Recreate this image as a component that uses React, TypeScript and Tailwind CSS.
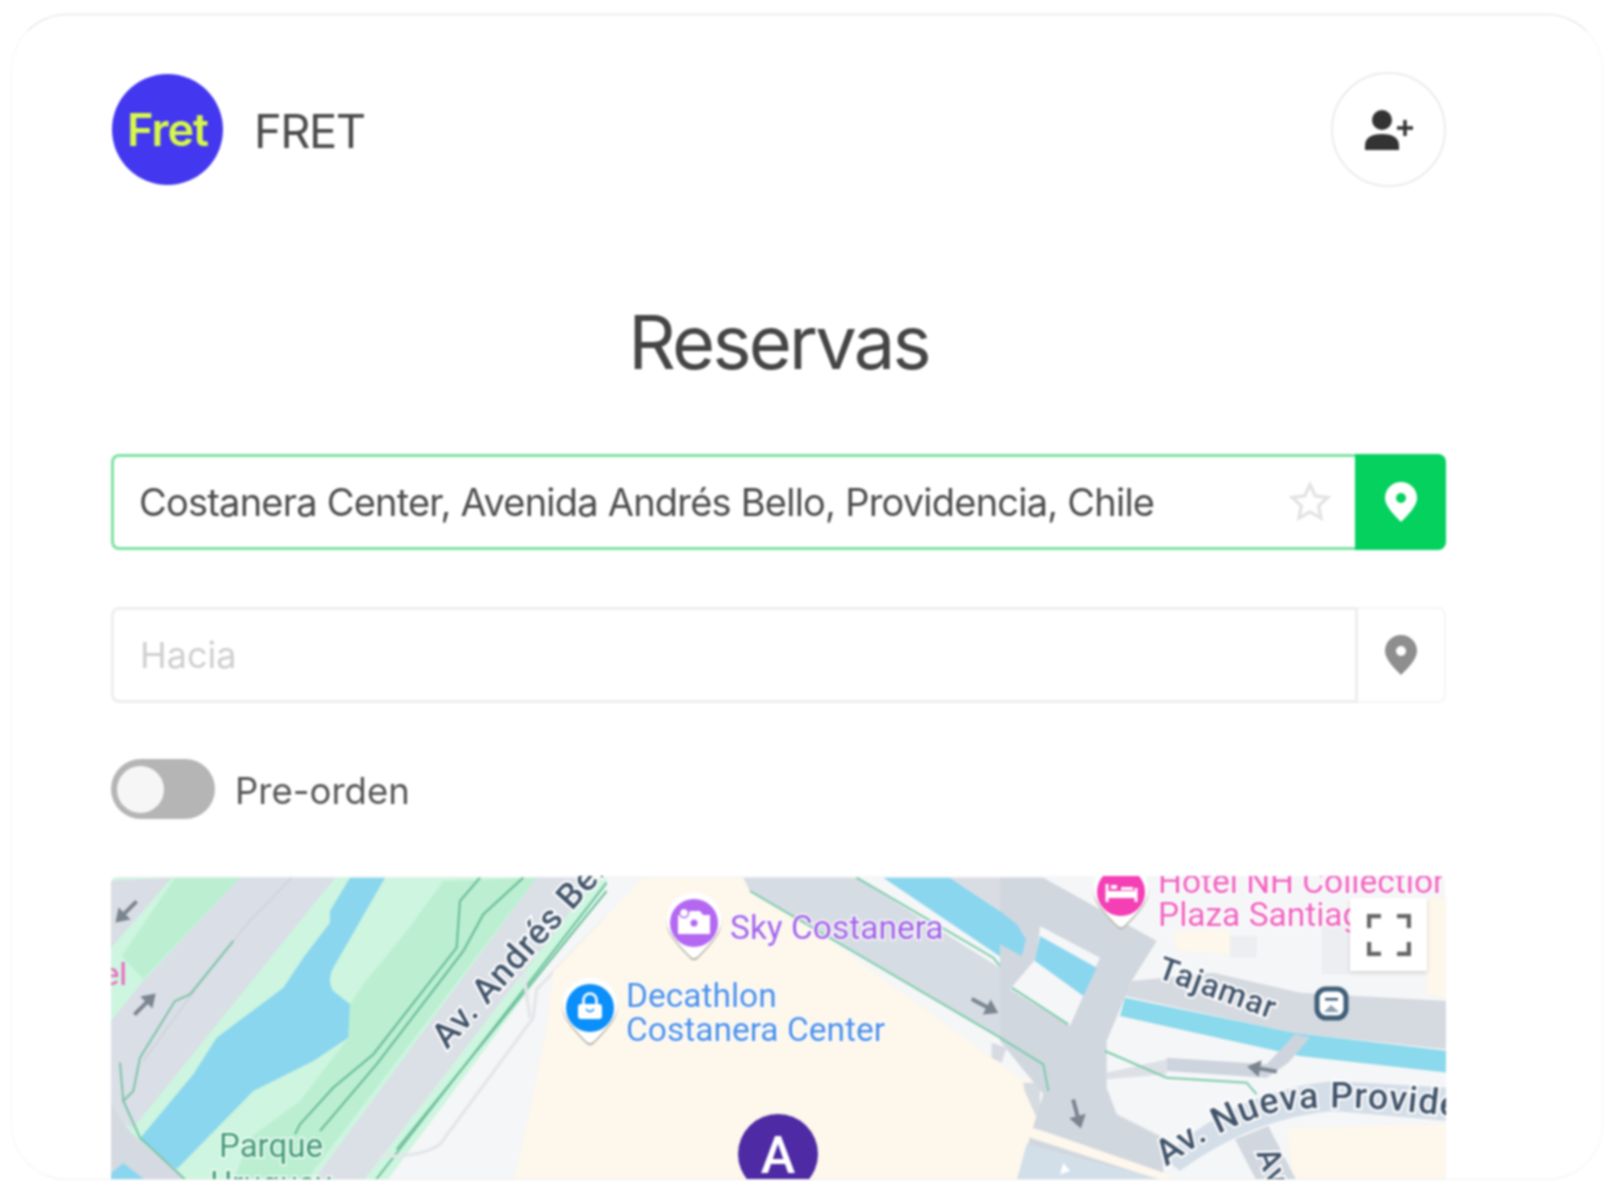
const bodyFont = "[font-family:Inter,'Liberation_Sans',sans-serif]"

function Arrow({ x, y, angle }: { x: number; y: number; angle: number }) {
  return (
    <path
      transform={`translate(${x} ${y}) rotate(${angle})`}
      d="M-15 -2 L2 -2 L2 -8.5 L15 0 L2 8.5 L2 2 L-15 2 Z"
      fill="#7b8590"
    />
  )
}

function Pin({ x, y, color, children }: { x: number; y: number; color: string; children: React.ReactNode }) {
  return (
    <g transform={`translate(${x} ${y})`}>
      <path d="M-27 2 A27.5 27.5 0 1 1 27 2 Q25 12 4 33 Q0 37 -4 33 Q-25 12 -27 2 Z" fill="#bfbcb2" transform="translate(0 2.5)" />
      <path d="M-27 2 A27.5 27.5 0 1 1 27 2 Q25 12 4 33 Q0 37 -4 33 Q-25 12 -27 2 Z" fill="#ffffff" />
      <circle r="24" fill={color} />
      {children}
    </g>
  )
}

const haloDark = { paintOrder: "stroke", stroke: "#ffffff", strokeWidth: 4 } as const
const halo = { paintOrder: "stroke", stroke: "#ffffff", strokeWidth: 3, strokeOpacity: 0.8 } as const

function MapArt() {
  return (
    <svg viewBox="111 875 1335 305" className="block h-full w-full" fontFamily="Roboto, sans-serif">
      <rect x="111" y="875" width="1335" height="305" fill="#f5f6f7" />

      {/* park and river, left of Av. Andres Bello */}
      <g transform="translate(100 860) scale(0.3333)">
        <polygon points="33,50 1320,50 640,960 33,960" fill="#cdf5df" />
        <polygon points="33,60 215,50 33,260" fill="#d9dde5" />
        <polygon points="225,50 420,50 130,355 65,285" fill="#bcefd2" />
        <polygon points="420,50 705,50 100,800 33,770 33,480 130,360" fill="#dadee6" />
        <polyline points="575,50 440,190 290,380 130,600" fill="none" stroke="#cfd3da" strokeWidth="5" />
        <polygon points="1030,60 1310,50 640,930 620,960 400,960 450,830 600,720 745,530 750,430 790,370 920,210" fill="#bcefd2" />
        <path d="M750 50 L855 50 L700 320 Q680 360 700 390 L750 430 L745 530 L640 600 L460 690 L230 925 L118 835 L280 640 L350 530 L550 380 L610 290 L690 185 L690 150 Z" fill="#8bd6ef" />
        <polygon points="33,935 70,905 140,960 33,960" fill="#8bd6ef" />
        <path d="M33 720 Q70 800 120 840 L265 960 L140 960 L70 905 L33 935 Z" fill="#d5d9e1" />
        <polyline points="1140,50 1080,120 1070,260 820,580 700,680 600,790 585,820" fill="none" stroke="#6fbf9d" strokeWidth="7" />
        <polyline points="1270,50 1150,160 1090,270 830,610 660,810" fill="none" stroke="#6fbf9d" strokeWidth="7" />
        <polyline points="400,240 270,400 225,420 120,590 100,690 70,720 60,605 70,720 120,830 260,960" fill="none" stroke="#7cc3a8" strokeWidth="6" />
        <polygon points="1310,50 1490,50 790,960 640,960" fill="#dbdfe6" />
        <polygon points="1490,50 1520,50 1520,75 860,960 790,960" fill="#cdf5df" />
        <line x1="825" y1="960" x2="1520" y2="65" stroke="#6fbf9d" strokeWidth="6" />
        <line x1="890" y1="865" x2="1520" y2="90" stroke="#6fbf9d" strokeWidth="6" />
        <path d="M840 885 Q960 890 1020 850 L1300 470 L1310 385 L1520 170" fill="none" stroke="#e4e6ea" strokeWidth="10" />
        <path d="M1270 330 L1290 470" fill="none" stroke="#e4e6ea" strokeWidth="10" />
      </g>

      {/* mall block and the roads behind it */}
      <g transform="translate(540 860) scale(0.3333)">
        <path d="M-80 960 L-20 700 L20 500 L40 330 L310 50 L1500 50 L1500 960 Z" fill="#fdf7ec" />
        <polygon points="610,50 950,50 1380,320 1410,380 1500,430 1500,600 630,90" fill="#d6dce3" />
        <polygon points="950,50 1030,50 1400,300 1380,320" fill="#f5f6f7" />
        <polygon points="1030,50 1230,50 1440,190 1465,240 1440,285 1400,300" fill="#8bd6ef" />
        <polygon points="1230,50 1500,50 1500,430 1410,380 1465,320 1465,240 1440,190" fill="#d9dde3" />
        <polygon points="800,185 1500,600 1500,650 1440,650 900,260" fill="#f5f6f7" />
        <polyline points="630,90 1500,600" fill="none" stroke="#7ccbab" strokeWidth="6" />
        <polyline points="950,50 1360,290 1400,340" fill="none" stroke="#7ccbab" strokeWidth="6" />
        <polygon points="1355,545 1400,560 1385,605 1355,590" fill="#d6dbe2" />
        <polygon points="1450,665 1500,665 1500,820 1470,800" fill="#d6dbe2" />
      </g>

      {/* right side streets */}
      <g transform="translate(1000 860) scale(0.3333)">
        <rect x="120" y="50" width="1222" height="910" fill="#f5f6f7" />
        <polygon points="520,210 690,205 690,280 530,270" fill="#fdf7ec" />
        <polygon points="690,225 770,225 770,290 690,290" fill="#eceef1" />
        <polygon points="965,195 1050,190 1050,340 965,340" fill="#eceef1" />
        <polygon points="1280,110 1342,110 1342,410 1280,400" fill="#fdf7ec" />
        <polygon points="860,800 1342,790 1342,960 880,960" fill="#fdf7ec" />
        <polygon points="0,620 60,660 110,770 50,960 0,960" fill="#fdf7ec" />

        <polygon points="0,50 130,50 470,240 395,360 320,540 320,680 350,760 490,830 490,960 50,960 105,780 130,700 0,540" fill="#d1d7df" />
        <polygon points="0,150 50,190 78,235 65,285 0,250" fill="#8bd6ef" />
        <polygon points="120,195 300,290 210,495 30,385 110,290" fill="#f5f6f7" />
        <polygon points="120,225 290,320 250,405 105,300" fill="#8bd6ef" />

        <path d="M395 360 L640 335 L900 395 L1342 420 L1342 565 L880 515 L375 405 Z" fill="#d5d9e0" />
        <path d="M375 410 L880 515 L1342 570 L1342 635 L900 585 L360 465 Z" fill="#8bd9ec" />
        <path d="M885 520 L930 530 L865 605 L800 650 L500 630 L500 590 L800 610 Z" fill="#cdd4dd" />
        <polygon points="320,635 500,595 500,640 320,655" fill="#dde0e6" />
        <polyline points="315,570 500,650 740,665 770,700" fill="none" stroke="#7ccbab" strokeWidth="6" />
        <polyline points="35,380 205,490" fill="none" stroke="#7ccbab" strokeWidth="6" />
        <polyline points="0,530 130,610 145,690" fill="none" stroke="#7ccbab" strokeWidth="6" />
        <path d="M490 890 Q700 690 1000 660 L1342 680 L1342 780 L1000 750 Q760 770 540 930 Z" fill="#d4dee8" />
        <polygon points="705,835 805,795 890,960 770,960" fill="#d1d7df" />
        <polygon points="95,800 130,810 520,945 490,960 90,830" fill="#fdf7ec" />
        <polygon points="80,850 500,960 50,960" fill="#d2dfe9" />
        <polygon points="190,905 210,930 180,940" fill="#ffffff" />
      </g>

      <Arrow x={126} y={911} angle={135} />
      <Arrow x={145} y={1003} angle={-45} />
      <Arrow x={985} y={1005} angle={28} />
      <Arrow x={1262} y={1068} angle={190} />
      <Arrow x={1077} y={1113} angle={75} />

      <g fontSize="33" fill="#3f9a76" textAnchor="middle" style={halo}>
        <text x="271" y="1156">Parque</text>
        <text x="271" y="1194">Uruguay</text>
      </g>
      <text x="127" y="984" fontSize="32" textAnchor="end" fill="#f062c0">el</text>

      <g fontWeight="500" fill="#40536a" letterSpacing="1" style={haloDark}>
        <text fontSize="35" transform="translate(447 1049) rotate(-48)">Av. Andrés Bello</text>
        <text fontSize="32" transform="translate(1156 976) rotate(20)">Tajamar</text>
        <path id="nueva" d="M1166 1166 Q1214 1130 1267 1113 Q1330 1098 1470 1118" fill="none" stroke="none" />
        <text fontSize="36">
          <textPath href="#nueva">Av. Nueva Providencia</textPath>
        </text>
        <text fontSize="32" transform="translate(1256 1152) rotate(68)">Av</text>
      </g>

      <Pin x={694} y={922} color="#b468f2">
        <path d="M-16 -8 H-7 L-4 -12 H6 L9 -8 H16 V11 H-16 Z" fill="#ffffff" />
        <circle cx="-10" cy="-10" r="4.5" fill="#ffffff" stroke="#b468f2" strokeWidth="1.5" />
        <circle cx="0" cy="0" r="3.5" fill="#b468f2" />
      </Pin>
      <Pin x={590} y={1007} color="#0b8ffa">
        <path d="M-6.5 -4 V-8 A6.5 6.5 0 0 1 6.5 -8 V-4" fill="none" stroke="#ffffff" strokeWidth="2.6" />
        <rect x="-12" y="-4" width="24" height="15" rx="3" fill="#ffffff" />
        <path d="M-4 1 Q0 6 4 1" fill="none" stroke="#0b8ffa" strokeWidth="1.6" />
      </Pin>
      <Pin x={1121} y={891} color="#f43fb5">
        <path d="M-14 -8 V10 M15 -4 V10" stroke="#ffffff" strokeWidth="3" fill="none" />
        <rect x="-14" y="-1" width="29" height="7" fill="#ffffff" />
        <rect x="-10" y="-7" width="6" height="4" fill="#ffffff" />
        <path d="M0 -5 H12 V-2 H0 Z" fill="#ffffff" />
      </Pin>

      <g fontSize="33.5" fill="#a262e8" style={halo}>
        <text x="730" y="938">Sky Costanera</text>
      </g>
      <g fontSize="33.5" fill="#4a8fe8" style={halo}>
        <text x="626" y="1006">Decathlon</text>
        <text x="626" y="1040">Costanera Center</text>
      </g>
      <g fontSize="33.5" fill="#f062c0" style={halo}>
        <text x="1158" y="892">Hotel NH Collection</text>
        <text x="1158" y="925">Plaza Santiago</text>
      </g>

      {/* metro badge */}
      <rect x="1317" y="988" width="29" height="29" rx="9" fill="#ffffff" stroke="#3f5e78" strokeWidth="5" />
      <rect x="1325" y="997" width="13" height="2.5" fill="#3f5e78" />
      <path d="M1324 1011 L1331 1004 L1339 1011 Z" fill="#8ba0b2" />

      <circle cx="778" cy="1153" r="40" fill="#4f2aa5" />
      <text x="778" y="1172" fontSize="52" fontWeight="500" fill="#ffffff" textAnchor="middle">A</text>
    </svg>
  )
}

function LocationPin({ color, hole }: { color: string; hole: string }) {
  return (
    <svg viewBox="0 0 32 40" className="h-10 w-8">
      <path d="M16 0C7 0 0 7 0 16 0 24 9 33 16 40 23 33 32 24 32 16 32 7 25 0 16 0Z" fill={color} />
      <circle cx="16" cy="16" r="5" fill={hole} />
    </svg>
  )
}

export default function App() {
  return (
    <div className={`min-h-[1200px] bg-white pt-[14px] pl-[11px] blur-[0.9px] ${bodyFont}`}>
      <div className="h-[1166px] w-[1592px] overflow-hidden rounded-[56px] border border-x-[#f5f5f5] border-t-[#dfdfdf] border-b-[#f0f0f0] pt-[57px] pr-[156px] pl-[99px]">
        <header className="flex h-[115px] items-center justify-between">
          <div className="flex items-center gap-8">
            <div className="ml-px flex h-[111px] w-[111px] items-center justify-center rounded-full bg-[#4338f0]">
              <span className="text-[45px] font-semibold tracking-[-1px] text-[#d7f84a]">Fret</span>
            </div>
            <span className="mt-1 -ml-px text-[47px] tracking-[-1.5px] text-[#4a4a4a]">FRET</span>
          </div>
          <button className="flex h-[115px] w-[115px] items-center justify-center rounded-full border-2 border-[#ececec] bg-white">
            <svg viewBox="0 0 48 40" className="h-10 w-12" fill="#333333">
              <circle cx="17" cy="10" r="10" />
              <path d="M0 40V36Q0 24 17 24T34 36V40Z" />
              <path d="M32 18H48M40 10V26" stroke="#333333" strokeWidth="3.5" fill="none" />
            </svg>
          </button>
        </header>

        <h1 className="mt-[110px] text-center text-[74px] leading-[90px] font-normal tracking-[-2.8px] text-[#454545]">Reservas</h1>

        <div className="mt-[67px] flex h-[96px] items-stretch">
          <div className="flex flex-1 items-center justify-between rounded-l-lg border-y-[3px] border-l-[3px] border-[#80e3a3] pr-[23px] pl-[25px]">
            <span className="text-[38px] tracking-[-0.78px] whitespace-nowrap text-[#4c4c4c]">
              Costanera Center, Avenida Andrés Bello, Providencia, Chile
            </span>
            <svg viewBox="0 0 24 24" className="h-11 w-11" fill="none" stroke="#e3e3e3" strokeWidth="1.8">
              <path d="M12 2.5l2.9 6.2 6.8.8-5 4.6 1.3 6.7-6-3.4-6 3.4 1.3-6.7-5-4.6 6.8-.8z" />
            </svg>
          </div>
          <div className="flex w-[91px] items-center justify-center rounded-r-lg bg-[#04d15e]">
            <LocationPin color="#ffffff" hole="#04d15e" />
          </div>
        </div>

        <div className="mt-[57px] flex h-[96px] items-stretch">
          <div className="flex flex-1 items-center rounded-l-lg border-3 border-[#eeeeee] pl-[26px]">
            <span className="text-[36px] text-[#cfcfcf]">Hacia</span>
          </div>
          <div className="flex w-[88px] items-center justify-center rounded-r-lg border-y-2 border-r-2 border-[#f5f5f5]">
            <LocationPin color="#8e8e8e" hole="#ffffff" />
          </div>
        </div>

        <div className="mt-[56px] flex items-center gap-[20px]">
          <div className="flex h-[60px] w-[104px] items-center rounded-full bg-[#b5b5b5] pl-[6px]">
            <div className="h-[47px] w-[47px] rounded-full bg-[#f6f6f6]" />
          </div>
          <span className="mt-1 text-[36.5px] text-[#555555]">Pre-orden</span>
        </div>

        <div className="relative mt-[57px] h-[305px] overflow-hidden rounded-t-lg">
          <MapArt />
          <button className="absolute top-[22px] right-[19px] flex h-[73px] w-[77px] items-center justify-center bg-white shadow-[0_2px_4px_rgba(0,0,0,0.15)]">
            <svg viewBox="0 0 44 42" className="h-[42px] w-[44px]" fill="none" stroke="#666666" strokeWidth="4.5">
              <path d="M2 14V2H14M30 2H42V14M42 28V40H30M14 40H2V28" />
            </svg>
          </button>
        </div>
      </div>
    </div>
  )
}
